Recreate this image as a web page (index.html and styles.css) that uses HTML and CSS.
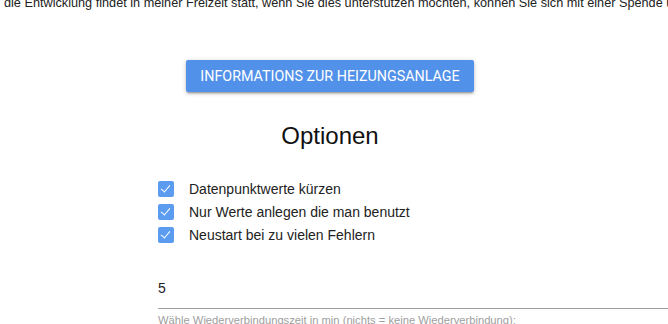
FILE: index.html
```html
<!DOCTYPE html>
<html lang="de">
<head>
    <meta charset="UTF-8">
    <meta name="viewport" content="width=device-width, initial-scale=1.0">
    <title>Einstellungen</title>
    <link rel="stylesheet" href="styles.css">
</head>
<body>
    <p class="intro">die Entwicklung findet in meiner Freizeit statt, wenn Sie dies unterstützen möchten, können Sie sich mit einer Spende unterstützen</p>

    <div class="content">
        <div class="center">
            <button type="button" class="btn">Informations zur Heizungsanlage</button>
        </div>

        <h2>Optionen</h2>

        <div class="options">
            <label class="check">
                <input type="checkbox" checked>
                <span class="box"></span>
                Datenpunktwerte kürzen
            </label>
            <label class="check">
                <input type="checkbox" checked>
                <span class="box"></span>
                Nur Werte anlegen die man benutzt
            </label>
            <label class="check">
                <input type="checkbox" checked>
                <span class="box"></span>
                Neustart bei zu vielen Fehlern
            </label>
        </div>

        <div class="field">
            <input type="text" id="reconnect" value="5">
            <label for="reconnect">Wähle Wiederverbindungszeit in min (nichts = keine Wiederverbindung):</label>
        </div>
    </div>
</body>
</html>
```

FILE: styles.css
```css
body {
    font-family: Arial, "Liberation Sans", sans-serif;
    background-color: #fff;
    color: #222;
    margin: 0;
    overflow: hidden;
}

.intro {
    margin: -4px 0 0 4px;
    font-size: 12.7px;
    line-height: 15px;
    white-space: nowrap;
    overflow: hidden;
    color: #222;
}

.content {
    width: 660px;
}

.center {
    text-align: center;
    margin-top: 49px;
}

.btn {
    background-color: #5291e9;
    color: #fff;
    border: none;
    border-radius: 2px;
    height: 32px;
    width: 288px;
    font-family: Roboto, sans-serif;
    font-size: 14.3px;
    text-transform: uppercase;
    box-shadow: 0 2px 2px 0 rgba(0, 0, 0, 0.14), 0 3px 1px -2px rgba(0, 0, 0, 0.12), 0 1px 5px 0 rgba(0, 0, 0, 0.2);
    cursor: pointer;
}

h2 {
    text-align: center;
    font-weight: normal;
    font-size: 24px;
    margin: 30px 0 0;
    color: #111;
}

.options {
    margin: 31px 0 0 158px;
    display: flex;
    flex-direction: column;
    gap: 7px;
}

.check {
    display: flex;
    align-items: center;
    font-size: 14px;
    height: 16px;
    color: #222;
}

.check input {
    display: none;
}

.box {
    width: 16px;
    height: 16px;
    border-radius: 2px;
    background-color: #5b9cf0;
    margin-right: 15px;
    position: relative;
}

.box::after {
    content: "";
    position: absolute;
    left: 5px;
    top: 2px;
    width: 4px;
    height: 8px;
    border-right: 1px solid #fff;
    border-bottom: 1px solid #fff;
    transform: rotate(40deg);
}

.field {
    margin: 37px 0 0 158px;
    width: 510px;
}

.field input {
    display: block;
    width: 100%;
    border: none;
    border-bottom: 1px solid #9e9e9e;
    outline: none;
    font-family: "Liberation Sans", Arial, sans-serif;
    font-size: 14px;
    color: #222;
    padding: 0 0 12px;
    margin: 0;
}

.field label {
    display: block;
    margin-top: 5px;
    font-size: 11.2px;
    color: #9e9e9e;
}
```
